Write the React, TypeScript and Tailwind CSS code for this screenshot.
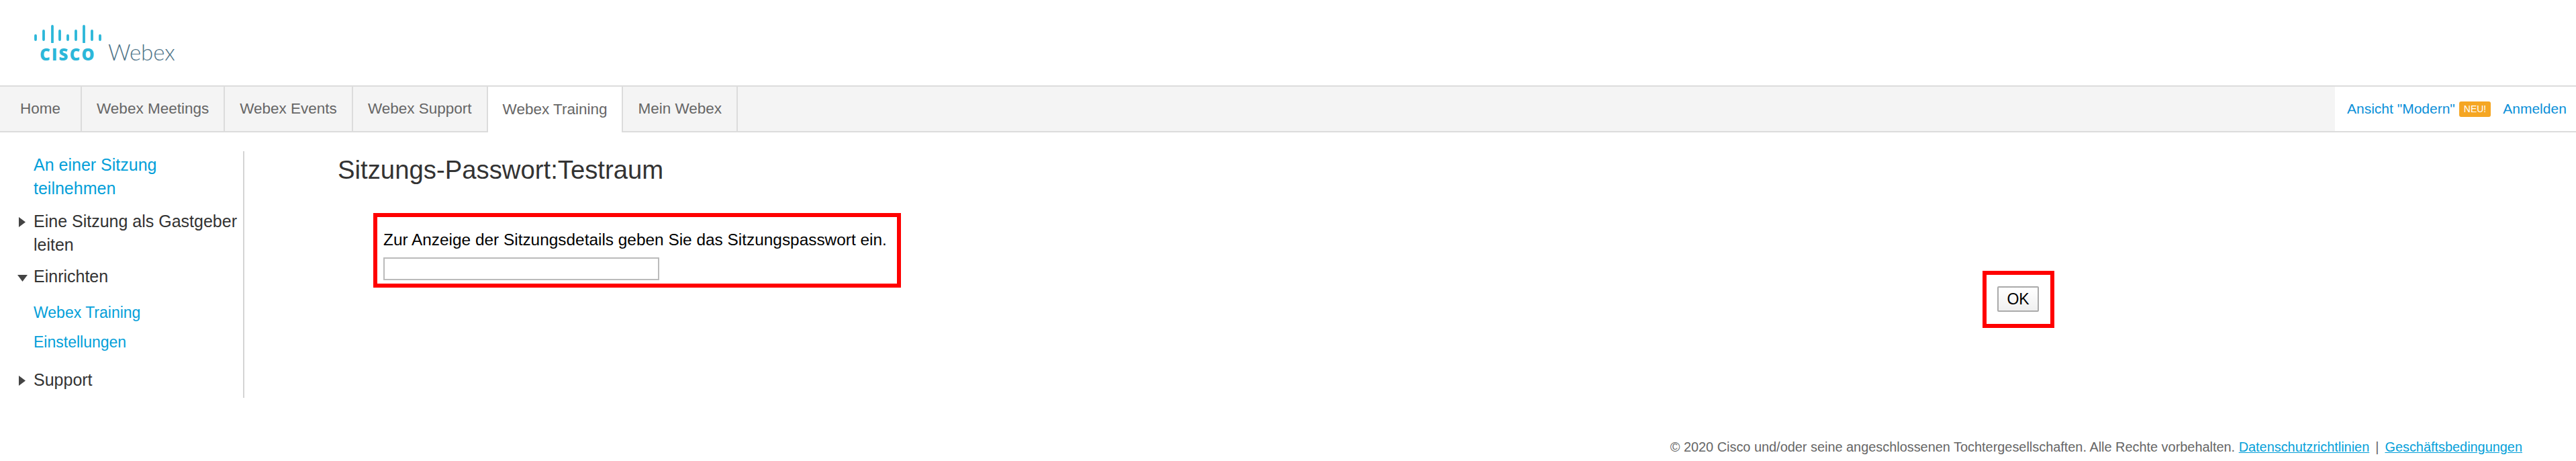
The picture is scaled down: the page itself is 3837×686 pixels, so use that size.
import React from 'react';

const arial = '[font-family:"Liberation_Sans",Arial,sans-serif]';
const navItems = ['Home', 'Webex Meetings', 'Webex Events', 'Webex Support', 'Webex Training', 'Mein Webex'];

const Caret = ({ open }: { open?: boolean }) =>
  open ? (
    <svg className="absolute top-[14px] left-[-24px] h-[11px] w-[15px]" viewBox="0 0 15 11">
      <path d="M0 1h15L7.5 11z" fill="#444" />
    </svg>
  ) : (
    <svg className="absolute top-[11px] left-[-22px] h-[15px] w-[10px]" viewBox="0 0 10 15">
      <path d="M0 0l10 7.5L0 15z" fill="#444" />
    </svg>
  );

const CiscoLogo = () => (
  <div className="flex items-end">
    <div className="flex w-[100px] flex-col items-center">
      <svg width="100" height="27" viewBox="0 0 100 27" className="block">
        <g stroke="#2cb7d9" strokeWidth="3.8" strokeLinecap="round">
          <path d="M2 16v6M14 9v13M27 2v24M38 9v13M50 16v6M62 9v13M74 2v24M86 9v13M98 16v6" />
        </g>
      </svg>
      <span className="mt-[8px] text-[24px] leading-[17px] font-extrabold tracking-[2.2px] text-[#2cb7d9] uppercase [font-family:'Open_Sans',sans-serif]">cisco</span>
    </div>
    <span className="ml-[10px] text-[33px] leading-[24px] font-light text-[#4f7488] [font-family:Lato,sans-serif]">Webex</span>
  </div>
);

export default function App() {
  return (
    <div className={`flex h-[686px] w-full flex-col overflow-hidden bg-white ${arial}`}>
      <header className="h-[127px] shrink-0 pt-[37px] pl-[51px]">
        <CiscoLogo />
      </header>

      <nav className="flex h-[70px] shrink-0 border-y-2 border-[#dcdcdc] bg-[#f4f4f4] text-[22.5px] text-[#666]">
        {navItems.map((item) => (
          <a
            key={item}
            className={`flex items-center border-r-2 border-[#dcdcdc] px-[22px] first:px-[30px] ${item === 'Webex Training' ? 'mb-[-2px] bg-white' : ''}`}
          >
            {item}
          </a>
        ))}
        <div className="ml-auto flex w-[359px] items-center bg-white pl-[18px] text-[21px] text-[#0a8fd8]">
          <a>Ansicht "Modern"</a>
          <span className="ml-[6px] rounded-[3px] bg-[#f5a623] px-[7px] py-[1px] text-[14px] leading-[21px] text-white">NEU!</span>
          <a className="ml-[18px]">Anmelden</a>
        </div>
      </nav>

      <main className="flex flex-1">
        <aside className="mt-[28px] h-[367px] w-[364px] shrink-0 border-r-2 border-[#d4d4d4] pt-[3px] pl-[50px] text-[25px] leading-[35px] text-[#333]">
          <a className="block w-[290px] text-[#049fd9]">An einer Sitzung teilnehmen</a>
          <div className="relative mt-[14px]"><Caret />Eine Sitzung als Gastgeber leiten</div>
          <div className="relative mt-[12px]"><Caret open />Einrichten</div>
          <a className="mt-[19px] block text-[23px] text-[#049fd9]">Webex Training</a>
          <a className="mt-[9px] block text-[23px] text-[#049fd9]">Einstellungen</a>
          <div className="relative mt-[21px]"><Caret />Support</div>
        </aside>

        <section className="flex-1 pt-[34px] pl-[139px]">
          <h1 className="text-[38.3px] leading-[44px] font-normal text-[#333]">Sitzungs-Passwort:Testraum</h1>
          <div className="mt-[68px] flex w-[2534px] items-start justify-between pl-[68px]">
            <div className="relative w-[750px]">
              <div className="absolute top-[-26px] right-[-21px] bottom-[-11px] left-[-15px] border-[6px] border-[#ff0000]" />
              <p className="text-[24.4px] leading-[28px] whitespace-nowrap text-black">Zur Anzeige der Sitzungsdetails geben Sie das Sitzungspasswort ein.</p>
              <input type="text" className="mt-[12px] block h-[34px] w-[411px] border-2 border-[#bbb] bg-white" />
            </div>
            <div className="relative mt-[83px]">
              <div className="absolute top-[-23px] right-[-23px] bottom-[-24px] left-[-22px] border-[6px] border-[#ff0000]" />
              <button className="block h-[38px] w-[62px] rounded-[2px] border-2 border-[#aaa] bg-gradient-to-b from-white to-[#f0f0f0] text-[23px] leading-none text-black">OK</button>
            </div>
          </div>
        </section>
      </main>

      <footer className="mr-[80px] mb-[9px] text-right text-[19.9px] leading-[24px] text-[#666]">
        © 2020 Cisco und/oder seine angeschlossenen Tochtergesellschaften. Alle Rechte vorbehalten.{' '}
        <a className="text-[#049fd9] underline">Datenschutzrichtlinien</a>
        <span className="mx-[9px]">|</span>
        <a className="text-[#049fd9] underline">Geschäftsbedingungen</a>
      </footer>
    </div>
  );
}
